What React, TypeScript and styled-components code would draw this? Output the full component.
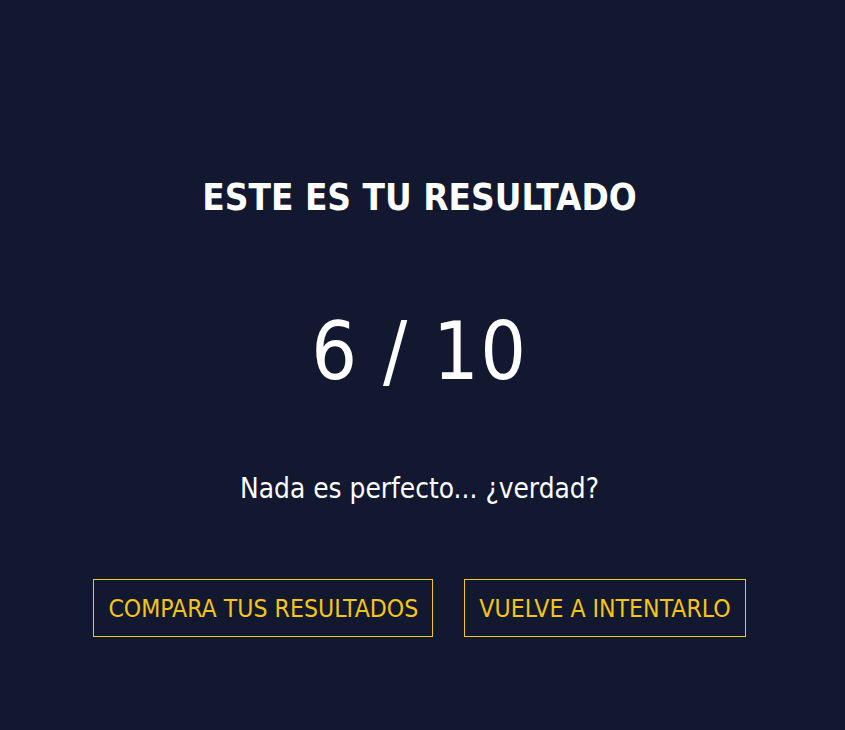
import React from "react";
import styled, { createGlobalStyle } from "styled-components";

const Global = createGlobalStyle`
  html, body { margin: 0; padding: 0; background: #111830; }
  body { font-family: "DejaVu Sans Condensed", "DejaVu Sans", sans-serif; }
`;

const Page = styled.main`
  width: 845px;
  height: 730px;
  background: #111830;
  display: flex;
  flex-direction: column;
  align-items: center;
  padding: 175px 6px 0 0;
  box-sizing: border-box;
  color: #ffffff;
`;

const Title = styled.h1`
  margin: 0;
  font-size: 36.6px;
  font-weight: bold;
  line-height: 46px;
`;

const Score = styled.div`
  margin-top: 83px;
  font-size: 80px;
  line-height: 96px;
  letter-spacing: 1.5px;
`;

const Message = styled.p`
  margin: 73px 0 0;
  font-size: 27.8px;
  line-height: 32px;
`;

const Actions = styled.div`
  margin-top: 74px;
  display: flex;
  gap: 31px;
`;

const Button = styled.button`
  background: transparent;
  border: 1px solid #f5c518;
  color: #f5c518;
  font-family: inherit;
  font-size: 24.6px;
  padding: 0 14px;
  height: 58px;
  cursor: pointer;
`;

export default function App() {
  return (
    <>
      <Global />
      <Page>
        <Title>ESTE ES TU RESULTADO</Title>
        <Score>6 / 10</Score>
        <Message>Nada es perfecto... ¿verdad?</Message>
        <Actions>
          <Button>COMPARA TUS RESULTADOS</Button>
          <Button>VUELVE A INTENTARLO</Button>
        </Actions>
      </Page>
    </>
  );
}
